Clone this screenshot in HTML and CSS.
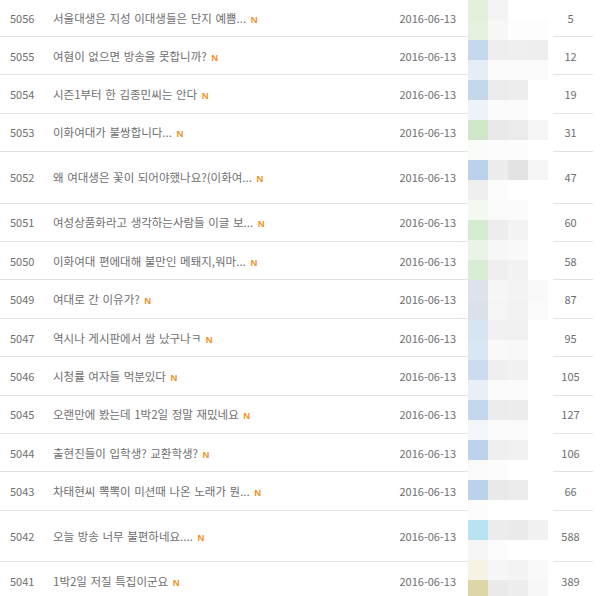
FILE: index.html
```html
<!DOCTYPE html>
<html>
	<head>
		<meta charset="utf-8">
		<title>게시판</title>
		<link rel="stylesheet" href="styles.css">
	</head>
	<body>
		<div class="board">
			<div class="row"><span class="num">5056</span><span class="subject">서울대생은 지성 이대생들은 단지 예쁨... <b class="new">N</b></span><span class="date">2016-06-13</span><span class="writer"></span><span class="hit">5</span></div>
			<div class="row"><span class="num">5055</span><span class="subject">여혐이 없으면 방송을 못합니까? <b class="new">N</b></span><span class="date">2016-06-13</span><span class="writer"></span><span class="hit">12</span></div>
			<div class="row"><span class="num">5054</span><span class="subject">시즌1부터 한 김종민씨는 안다 <b class="new">N</b></span><span class="date">2016-06-13</span><span class="writer"></span><span class="hit">19</span></div>
			<div class="row"><span class="num">5053</span><span class="subject">이화여대가 불쌍합니다... <b class="new">N</b></span><span class="date">2016-06-13</span><span class="writer"></span><span class="hit">31</span></div>
			<div class="row tall"><span class="num">5052</span><span class="subject">왜 여대생은 꽃이 되어야했나요?(이화여... <b class="new">N</b></span><span class="date">2016-06-13</span><span class="writer"></span><span class="hit">47</span></div>
			<div class="row"><span class="num">5051</span><span class="subject">여성상품화라고 생각하는사람들 이글 보... <b class="new">N</b></span><span class="date">2016-06-13</span><span class="writer"></span><span class="hit">60</span></div>
			<div class="row"><span class="num">5050</span><span class="subject">이화여대 편에대해 불만인 메퇘지,워마... <b class="new">N</b></span><span class="date">2016-06-13</span><span class="writer"></span><span class="hit">58</span></div>
			<div class="row"><span class="num">5049</span><span class="subject">여대로 간 이유가? <b class="new">N</b></span><span class="date">2016-06-13</span><span class="writer"></span><span class="hit">87</span></div>
			<div class="row"><span class="num">5047</span><span class="subject">역시나 게시판에서 쌈 났구나ㅋ <b class="new">N</b></span><span class="date">2016-06-13</span><span class="writer"></span><span class="hit">95</span></div>
			<div class="row"><span class="num">5046</span><span class="subject">시청률 여자들 먹분있다 <b class="new">N</b></span><span class="date">2016-06-13</span><span class="writer"></span><span class="hit">105</span></div>
			<div class="row"><span class="num">5045</span><span class="subject">오랜만에 봤는데 1박2일 정말 재밌네요 <b class="new">N</b></span><span class="date">2016-06-13</span><span class="writer"></span><span class="hit">127</span></div>
			<div class="row"><span class="num">5044</span><span class="subject">출현진들이 입학생? 교환학생? <b class="new">N</b></span><span class="date">2016-06-13</span><span class="writer"></span><span class="hit">106</span></div>
			<div class="row"><span class="num">5043</span><span class="subject">차태현씨 뽁뽁이 미션때 나온 노래가 뭔... <b class="new">N</b></span><span class="date">2016-06-13</span><span class="writer"></span><span class="hit">66</span></div>
			<div class="row tall"><span class="num">5042</span><span class="subject">오늘 방송 너무 불편하네요.... <b class="new">N</b></span><span class="date">2016-06-13</span><span class="writer"></span><span class="hit">588</span></div>
			<div class="row"><span class="num">5041</span><span class="subject">1박2일 저질 특집이군요 <b class="new">N</b></span><span class="date">2016-06-13</span><span class="writer"></span><span class="hit">389</span></div>

			<!-- 작성자 모자이크 -->
			<div class="mosaic" id="mosaic"></div>
		</div>

		<script type="text/javascript">
			// 모자이크 칸 색상 (한 줄 = 20px, 4칸 + 여백 1칸)
			let cells = [
				['#e3f0dc', '#f4f4f4', '#fff', '#fff'],
				['#e4f1de', '#f7f7f7', '#fdfdfd', '#fdfdfd'],
				['#c6d9ec', '#eeeeee', '#efefef', '#eeeeee'],
				['#e5edf6', '#fafafa', '#fafafa', '#fafafa'],
				['#c4d8ec', '#ebebeb', '#ededed', '#fff'],
				['#eef3f9', '#fbfbfb', '#fbfbfb', '#fff'],
				['#cfe7c9', '#e9e9e9', '#ebebeb', '#f5f5f5'],
				['#f8fbf7', '#fcfcfc', '#fcfcfc', '#fff'],
				['#b9d2ea', '#ececec', '#e3e3e3', '#f5f5f5'],
				['#efefef', '#fcfcfc', '#fff', '#fff'],
				['#f3f8f1', '#fafafa', '#fafafa', '#fff'],
				['#d3ebcf', '#ededed', '#f3f3f3', '#fff'],
				['#e9f3e6', '#f7f7f7', '#f9f9f9', '#fff'],
				['#d8edd3', '#efefef', '#f2f2f2', '#fff'],
				['#dde2ec', '#f6f6f6', '#f3f3f3', '#f9f9f9'],
				['#dbe1eb', '#f5f5f5', '#f2f2f2', '#fafafa'],
				['#d7e5f2', '#f1f1f1', '#f1f1f1', '#fff'],
				['#d9e7f3', '#f9f9f9', '#f8f8f8', '#fff'],
				['#cadcee', '#efefef', '#f1f1f1', '#fff'],
				['#e8eff7', '#fafafa', '#fafafa', '#fff'],
				['#c3d8ec', '#ebebeb', '#ececec', '#fff'],
				['#f2f5fa', '#fafafa', '#fafafa', '#fff'],
				['#bcd3eb', '#efefef', '#f0f0f0', '#fff'],
				['#fafafa', '#fcfcfc', '#fff', '#fff'],
				['#bad2ea', '#e9e9e9', '#ececec', '#fff'],
				['#fcfcfc', '#fff', '#fff', '#fff'],
				['#b9e3f1', '#ececec', '#eaeaea', '#f1f1f1'],
				['#f5f5f5', '#fcfcfc', '#fff', '#fff'],
				['#f6f3e4', '#f6f6f6', '#f3f3f3', '#f9f9f9'],
				['#dcd6a8', '#eaeaea', '#ededed', '#f7f7f7']
			]
			let oMosaic = document.getElementById('mosaic')
			let str = ''
			for (let i = 0; i < cells.length; i++) {
				for (let j = 0; j < cells[i].length; j++) {
					str += `<i style="background:${cells[i][j]}"></i>`
				}
				str += '<i></i>'
			}
			oMosaic.innerHTML = str
		</script>
	</body>
</html>
```

FILE: styles.css
```css
* {
	margin: 0;
	padding: 0;
}

body {
	background-color: #fff;
	font-family: "Noto Sans CJK KR", "Noto Sans", sans-serif;
	font-size: 11px;
	color: #6e6e6e;
}

.board {
	position: relative;
	width: 593px;
	overflow: hidden;
	height: 596px;
}

.row {
	display: grid;
	grid-template-columns: 53px 337px 78px 80px 45px;
	align-items: center;
	height: 38.4px;
	border-bottom: 1px solid #e3e3e3;
	box-sizing: border-box;
}

.row:first-child {
	height: 38px;
	margin-top: -1px;
}

.tall {
	height: 51.5px;
}

.num {
	padding-left: 10px;
}

.subject {
	white-space: nowrap;
	font-size: 11.5px;
	word-spacing: 1px;
}

.new {
	font-family: "Liberation Sans", Arial, sans-serif;
	font-size: 9.5px;
	font-weight: bold;
	color: #f0901f;
	margin-left: 1px;
}

.date {
	text-align: right;
	padding-right: 12px;
}

.hit {
	text-align: center;
}

.mosaic {
	position: absolute;
	left: 468px;
	top: 0;
	width: 85px;
	height: 600px;
	display: grid;
	grid-template-columns: 20px 20px 20px 20px 5px;
	grid-auto-rows: 20px;
	background-color: #fff;
}

.mosaic i {
	display: block;
}
```
